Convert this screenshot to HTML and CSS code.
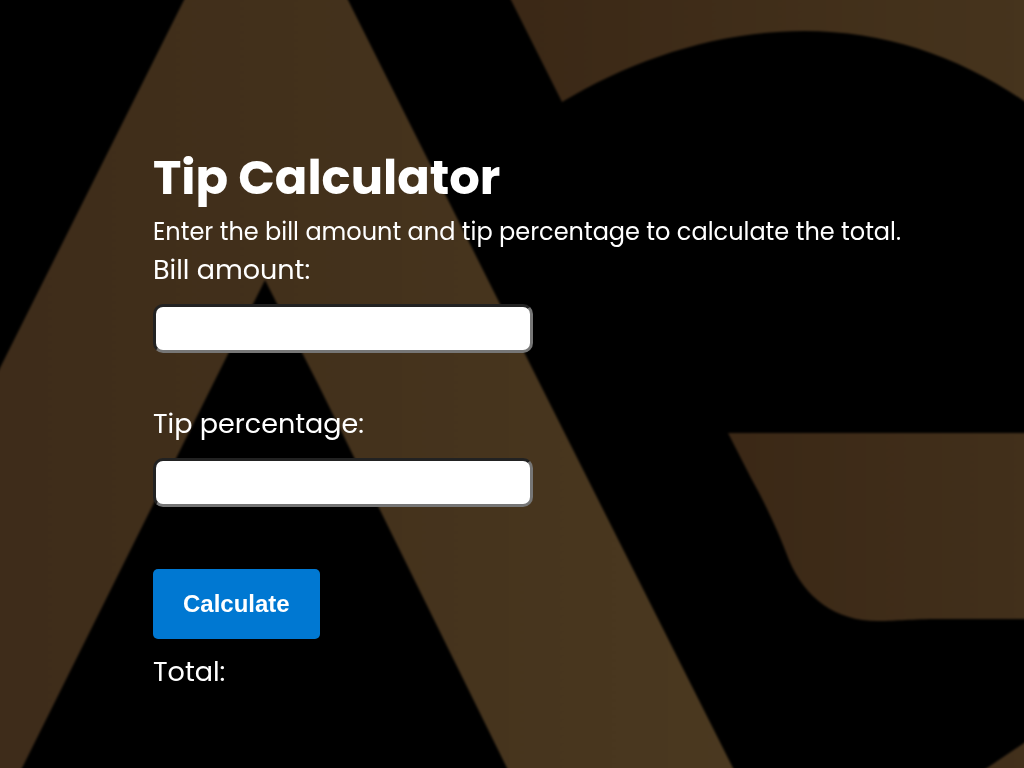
FILE: index.html
```html
<!DOCTYPE html>
<html lang="en">
<head>
  <meta charset="utf-8">
  <meta name="viewport" content="width=device-width, initial-scale=1">
  <title>Tip Calculator</title>
  <link rel="stylesheet" href="styles.css">
</head>
<body>
  <svg class="backdrop" viewBox="0 0 1024 768" preserveAspectRatio="xMidYMid slice" aria-hidden="true">
    <defs>
      <linearGradient id="bronze-left" gradientUnits="userSpaceOnUse" x1="0" y1="0" x2="732" y2="0">
        <stop offset="0" stop-color="#3e2c1a"/>
        <stop offset="0.35" stop-color="#42301b"/>
        <stop offset="1" stop-color="#4b3920"/>
      </linearGradient>
      <linearGradient id="bronze-top" gradientUnits="userSpaceOnUse" x1="510" y1="0" x2="1024" y2="0">
        <stop offset="0" stop-color="#3b2816"/>
        <stop offset="1" stop-color="#46341d"/>
      </linearGradient>
      <linearGradient id="bronze-bar" gradientUnits="userSpaceOnUse" x1="728" y1="0" x2="1024" y2="0">
        <stop offset="0" stop-color="#3b2816"/>
        <stop offset="1" stop-color="#42301b"/>
      </linearGradient>
      <filter id="soften" x="-5%" y="-5%" width="110%" height="110%" color-interpolation-filters="sRGB">
        <feGaussianBlur stdDeviation="1"/>
      </filter>
    </defs>
    <g filter="url(#soften)">
      <path fill="url(#bronze-left)" d="M-20 410L0 368L184 0L194 -20H338L348 0L540 384L733 768L743 788H517L507 768L318 384L265 280L213 384L22 768L12 788H-20Z"/>
      <path fill="url(#bronze-top)" d="M502 -20L511 0L562 102C632 60 716 31 804 31C885 31 958 56 1024 101L1044 115V-20Z"/>
      <path fill="url(#bronze-bar)" d="M728 433H1044V619H940C910 619 898 621 878 621C835 621 805 598 789 560C779 533 765 503 751 478Z"/>
      <path fill="url(#bronze-bar)" d="M956 788L987 768L1024 743L1044 730V788Z"/>
    </g>
  </svg>
  <main class="calculator">
    <h1 class="title">Tip Calculator</h1>
    <p class="intro">Enter the bill amount and tip percentage to calculate the total.</p>
    <form class="form">
      <div class="field">
        <label class="label" for="bill">Bill amount:</label>
        <input class="input" type="text" inputmode="decimal" id="bill">
      </div>
      <div class="field">
        <label class="label" for="tip">Tip percentage:</label>
        <input class="input" type="text" inputmode="decimal" id="tip">
      </div>
      <button class="button" type="button">Calculate</button>
      <output class="total" for="bill tip">Total:</output>
    </form>
  </main>
</body>
</html>
```
FILE: styles.css
```css
* {
  box-sizing: border-box;
  margin: 0;
}

body {
  min-height: 100vh;
  background: #000;
  color: #fff;
  font-family: Poppins, Inter, "Open Sans", sans-serif;
}

.backdrop {
  position: fixed;
  inset: 0;
  z-index: -1;
  width: 100%;
  height: 100%;
}

.calculator {
  display: flex;
  flex-direction: column;
  justify-content: center;
  min-height: 100vh;
  padding: 66px 48px 0 153px;
}

.title {
  font-size: 48px;
  font-weight: 700;
  line-height: 72px;
}

.intro {
  font-size: 24px;
  line-height: 36px;
}

.form {
  display: flex;
  flex-direction: column;
  align-items: flex-start;
}

.field {
  display: flex;
  flex-direction: column;
  gap: 14px;
  width: 100%;
  margin-bottom: 51px;
}

.label,
.total {
  font-size: 27px;
  line-height: 40px;
}

.input {
  width: 380px;
  max-width: 100%;
  height: 49px;
  padding: 8px;
  border: 3px solid;
  border-color: #222 #767676 #767676 #222;
  border-radius: 10px;
  background: #fff;
  color: #000;
  font: inherit;
  font-size: 24px;
}

.button {
  height: 70px;
  margin: 11px 0 13px;
  padding: 0 30px;
  border: 0;
  border-radius: 5px;
  background: #0078d2;
  color: #fff;
  font: bold 24px "Liberation Sans", Arial, sans-serif;
}
```
